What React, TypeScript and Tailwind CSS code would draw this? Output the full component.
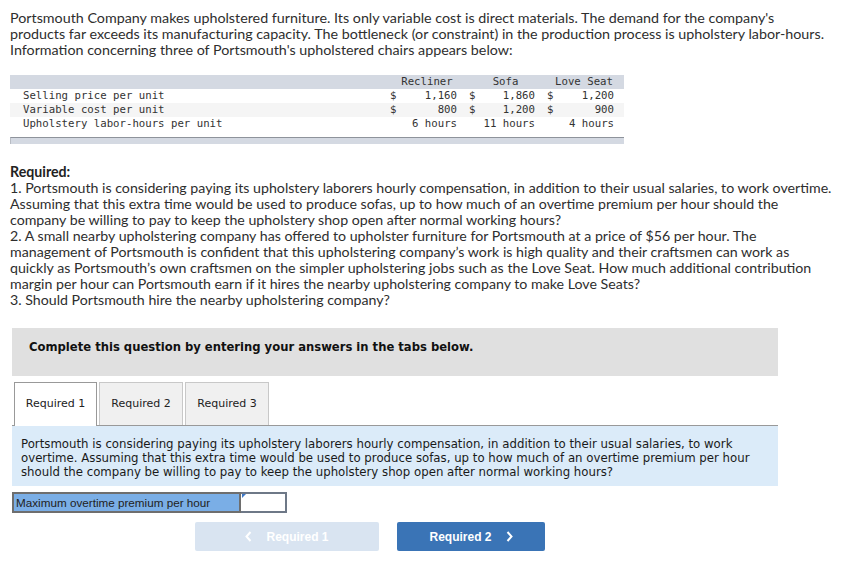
import React from "react";

const intro = [
  "Portsmouth Company makes upholstered furniture. Its only variable cost is direct materials. The demand for the company's",
  "products far exceeds its manufacturing capacity. The bottleneck (or constraint) in the production process is upholstery labor-hours.",
  "Information concerning three of Portsmouth's upholstered chairs appears below:",
];

const req = [
  "1. Portsmouth is considering paying its upholstery laborers hourly compensation, in addition to their usual salaries, to work overtime.",
  "Assuming that this extra time would be used to produce sofas, up to how much of an overtime premium per hour should the",
  "company be willing to pay to keep the upholstery shop open after normal working hours?",
  "2. A small nearby upholstering company has offered to upholster furniture for Portsmouth at a price of $56 per hour. The",
  "management of Portsmouth is confident that this upholstering company\u2019s work is high quality and their craftsmen can work as",
  "quickly as Portsmouth\u2019s own craftsmen on the simpler upholstering jobs such as the Love Seat. How much additional contribution",
  "margin per hour can Portsmouth earn if it hires the nearby upholstering company to make Love Seats?",
  "3. Should Portsmouth hire the nearby upholstering company?",
];

const panel = [
  "Portsmouth is considering paying its upholstery laborers hourly compensation, in addition to their usual salaries, to work",
  "overtime. Assuming that this extra time would be used to produce sofas, up to how much of an overtime premium per hour",
  "should the company be willing to pay to keep the upholstery shop open after normal working hours?",
];

type Row = { label: string; cells: [string, string][]; bg: string };
const rows: Row[] = [
  { label: "Selling price per unit", cells: [["$", "1,160"], ["$", "1,860"], ["$", "1,200"]], bg: "bg-white" },
  { label: "Variable cost per unit", cells: [["$", "800"], ["$", "1,200"], ["$", "900"]], bg: "bg-[#f5f5f5]" },
  { label: "Upholstery labor-hours per unit", cells: [["", "6 hours"], ["", "11 hours"], ["", "4 hours"]], bg: "bg-white" },
];

export default function App() {
  return (
    <div className="w-[863px] h-[578px] bg-white overflow-hidden pt-[10px] pl-[10px]">
      <div className="font-['Lato',sans-serif] text-[14.3px] leading-[16px] text-[#2e2e2e]">
        {intro.map((l, i) => (
          <div key={i} className="whitespace-nowrap">{l}</div>
        ))}
      </div>

      {/* Table */}
      <div className="mt-[17px] w-[614px] font-['DejaVu_Sans_Mono',monospace] text-[10.7px] leading-[14px] text-[#333]">
        <div className="flex h-[14px] bg-[#d4d9e2]">
          <div className="w-[368px]" />
          {["Recliner", "Sofa", "Love Seat"].map((h, i) => (
            <div key={i} className={`${i === 1 ? "w-[78px]" : "w-[79px]"} pl-[19px] text-center whitespace-nowrap`}>{h}</div>
          ))}
        </div>
        {rows.map((r, i) => (
          <div key={i} className={`flex h-[14px] ${r.bg}`}>
            <div className="w-[368px] pl-[13px] whitespace-nowrap">{r.label}</div>
            {r.cells.map((c, j) => (
              <div key={j} className={`${j === 1 ? "w-[78px]" : "w-[79px]"} flex`}>
                <span className="pl-[12px] w-[20px]">{c[0]}</span>
                <span className="flex-1 text-right whitespace-nowrap">{c[1]}</span>
              </div>
            ))}
          </div>
        ))}
        <div className="mt-[6px] h-[7px] bg-[#d4d9e2] border-t border-t-[#8e939b] border-l border-l-[#b8bcc4]" />
      </div>

      {/* Required */}
      <div className="mt-[20px] font-['Lato',sans-serif] text-[14.2px] leading-[16px] text-[#2e2e2e]">
        <div className="font-bold text-[#222]">Required:</div>
        {req.map((l, i) => (
          <div key={i} className="whitespace-nowrap">{l}</div>
        ))}
      </div>

      {/* Instructions box */}
      <div className="mt-[20px] ml-[2px] w-[766px] h-[48px] bg-[#e0e0e0] pt-[12px] pl-[17px] font-['DejaVu_Sans',sans-serif] text-[11.6px] leading-[14px] font-bold text-[#111]">
        Complete this question by entering your answers in the tabs below.
      </div>

      {/* Tabs */}
      <div className="mt-[6px] ml-[2px] w-[766px] flex items-end border-b border-b-[#999] h-[44px] font-['DejaVu_Sans',sans-serif] text-[11px] text-[#222]">
        <div className="ml-[2px] w-[83px] h-[44px] bg-white border border-[#999] border-b-0 -mb-px flex items-center justify-center">Required 1</div>
        <div className="ml-[2px] w-[84px] h-[43px] bg-[#f0f0f0] border border-[#c8c8c8] border-b-0 flex items-center justify-center">Required 2</div>
        <div className="ml-[2px] w-[84px] h-[43px] bg-[#f0f0f0] border border-[#c8c8c8] border-b-0 flex items-center justify-center">Required 3</div>
      </div>

      {/* Panel */}
      <div className="ml-[2px] w-[766px] h-[60px] bg-[#dbebf9] pt-[11px] pl-[9px] font-['DejaVu_Sans',sans-serif] text-[11.75px] leading-[14px] text-[#1a1a1a]">
        {panel.map((l, i) => (
          <div key={i} className="whitespace-nowrap">{l}</div>
        ))}
      </div>

      {/* Input row */}
      <div className="mt-[6px] ml-[2px] flex h-[21px] font-['Liberation_Sans',Arial,sans-serif] text-[11.7px]">
        <div className="w-[229px] bg-[#7aaee6] border-2 border-[#6e6e6e] flex items-center pl-[2px] text-[#222]">
          Maximum overtime premium per hour
        </div>
        <div className="relative w-[46px] bg-white border-2 border-l-0 border-[#6e7887]">
          <div className="absolute left-[1px] top-0 w-0 h-0 border-t-[4px] border-t-[#3d78c8] border-r-[4px] border-r-transparent" />
        </div>
      </div>

      {/* Buttons */}
      <div className="mt-[9px] flex gap-[18px] ml-[185px] font-['Liberation_Sans',Arial,sans-serif] text-[12px] font-bold text-white">
        <div className="w-[184px] h-[29px] rounded-[2px] bg-[#d9e4f1] flex items-center justify-center gap-[14px]">
          <svg width="7" height="11" viewBox="0 0 7 11"><path d="M5.5 1 L1.5 5.5 L5.5 10" stroke="white" strokeWidth="2" fill="none" /></svg>
          <span>Required 1</span>
        </div>
        <div className="w-[148px] h-[29px] rounded-[2px] bg-[#3a74b6] flex items-center justify-center gap-[14px]">
          <span>Required 2</span>
          <svg width="7" height="11" viewBox="0 0 7 11"><path d="M1.5 1 L5.5 5.5 L1.5 10" stroke="white" strokeWidth="2" fill="none" /></svg>
        </div>
      </div>
    </div>
  );
}
